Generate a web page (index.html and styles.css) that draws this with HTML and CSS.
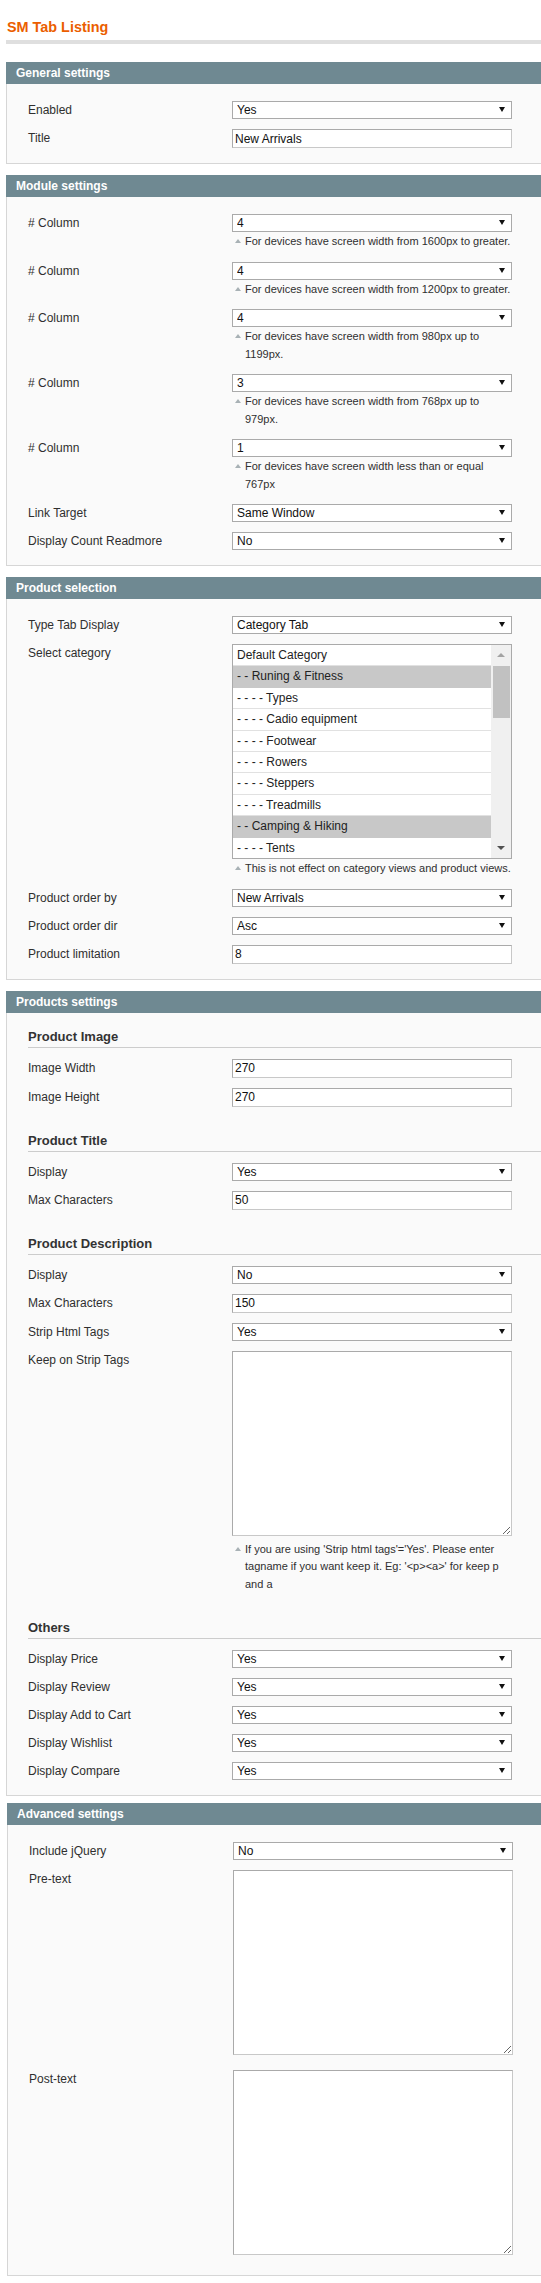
FILE: index.html
```html
<!DOCTYPE html>
<html lang="en">
<head>
<meta charset="utf-8">
<title>SM Tab Listing</title>
<link rel="stylesheet" href="styles.css">
</head>
<body>
<div class="page">
  <header class="content-header">
    <h3 class="page-title">SM Tab Listing</h3>
  </header>

  <section class="box">
    <div class="box-head"><h4>General settings</h4></div>
    <div class="box-body">
      <div class="row">
        <label class="lbl">Enabled</label>
        <div class="val"><div class="sel"><select><option selected>Yes</option><option>No</option></select></div></div>
      </div>
      <div class="row">
        <label class="lbl">Title</label>
        <div class="val"><input class="txt" type="text" value="New Arrivals"></div>
      </div>
    </div>
  </section>

  <section class="box">
    <div class="box-head"><h4>Module settings</h4></div>
    <div class="box-body">
      <div class="row">
        <label class="lbl"># Column</label>
        <div class="val">
          <div class="sel"><select><option selected>4</option></select></div>
          <p class="note">For devices have screen width from 1600px to greater.</p>
        </div>
      </div>
      <div class="row">
        <label class="lbl"># Column</label>
        <div class="val">
          <div class="sel"><select><option selected>4</option></select></div>
          <p class="note">For devices have screen width from 1200px to greater.</p>
        </div>
      </div>
      <div class="row">
        <label class="lbl"># Column</label>
        <div class="val">
          <div class="sel"><select><option selected>4</option></select></div>
          <p class="note">For devices have screen width from 980px up to<br>1199px.</p>
        </div>
      </div>
      <div class="row">
        <label class="lbl"># Column</label>
        <div class="val">
          <div class="sel"><select><option selected>3</option></select></div>
          <p class="note">For devices have screen width from 768px up to<br>979px.</p>
        </div>
      </div>
      <div class="row">
        <label class="lbl"># Column</label>
        <div class="val">
          <div class="sel"><select><option selected>1</option></select></div>
          <p class="note">For devices have screen width less than or equal<br>767px</p>
        </div>
      </div>
      <div class="row">
        <label class="lbl">Link Target</label>
        <div class="val"><div class="sel"><select><option selected>Same Window</option><option>New Window</option></select></div></div>
      </div>
      <div class="row">
        <label class="lbl">Display Count Readmore</label>
        <div class="val"><div class="sel"><select><option selected>No</option><option>Yes</option></select></div></div>
      </div>
    </div>
  </section>

  <section class="box">
    <div class="box-head"><h4>Product selection</h4></div>
    <div class="box-body">
      <div class="row">
        <label class="lbl">Type Tab Display</label>
        <div class="val"><div class="sel"><select><option selected>Category Tab</option></select></div></div>
      </div>
      <div class="row">
        <label class="lbl">Select category</label>
        <div class="val">
          <div class="listbox" role="listbox" aria-multiselectable="true">
            <ul class="opts">
              <li role="option">Default Category</li>
              <li role="option" class="on" aria-selected="true">- - Runing &amp; Fitness</li>
              <li role="option">- - - - Types</li>
              <li role="option">- - - - Cadio equipment</li>
              <li role="option">- - - - Footwear</li>
              <li role="option">- - - - Rowers</li>
              <li role="option">- - - - Steppers</li>
              <li role="option">- - - - Treadmills</li>
              <li role="option" class="on" aria-selected="true">- - Camping &amp; Hiking</li>
              <li role="option">- - - - Tents</li>
            </ul>
            <div class="sbar" aria-hidden="true">
              <span class="sb-btn sb-up"></span>
              <span class="sb-thumb"></span>
              <span class="sb-space"></span>
              <span class="sb-btn sb-down"></span>
            </div>
          </div>
          <p class="note">This is not effect on category views and product views.</p>
        </div>
      </div>
      <div class="row">
        <label class="lbl">Product order by</label>
        <div class="val"><div class="sel"><select><option selected>New Arrivals</option></select></div></div>
      </div>
      <div class="row">
        <label class="lbl">Product order dir</label>
        <div class="val"><div class="sel"><select><option selected>Asc</option><option>Desc</option></select></div></div>
      </div>
      <div class="row">
        <label class="lbl">Product limitation</label>
        <div class="val"><input class="txt" type="text" value="8"></div>
      </div>
    </div>
  </section>

  <section class="box tight">
    <div class="box-head"><h4>Products settings</h4></div>
    <div class="box-body">
      <h5 class="subhead first">Product Image</h5>
      <div class="row">
        <label class="lbl">Image Width</label>
        <div class="val"><input class="txt" type="text" value="270"></div>
      </div>
      <div class="row">
        <label class="lbl">Image Height</label>
        <div class="val"><input class="txt" type="text" value="270"></div>
      </div>

      <h5 class="subhead">Product Title</h5>
      <div class="row">
        <label class="lbl">Display</label>
        <div class="val"><div class="sel"><select><option selected>Yes</option><option>No</option></select></div></div>
      </div>
      <div class="row">
        <label class="lbl">Max Characters</label>
        <div class="val"><input class="txt" type="text" value="50"></div>
      </div>

      <h5 class="subhead">Product Description</h5>
      <div class="row">
        <label class="lbl">Display</label>
        <div class="val"><div class="sel"><select><option selected>No</option><option>Yes</option></select></div></div>
      </div>
      <div class="row">
        <label class="lbl">Max Characters</label>
        <div class="val"><input class="txt" type="text" value="150"></div>
      </div>
      <div class="row">
        <label class="lbl">Strip Html Tags</label>
        <div class="val"><div class="sel"><select><option selected>Yes</option><option>No</option></select></div></div>
      </div>
      <div class="row">
        <label class="lbl">Keep on Strip Tags</label>
        <div class="val">
          <textarea class="area"></textarea>
          <p class="note">If you are using 'Strip html tags'='Yes'. Please enter<br>tagname if you want keep it. Eg: '&lt;p&gt;&lt;a&gt;' for keep p<br>and a</p>
        </div>
      </div>

      <h5 class="subhead">Others</h5>
      <div class="row">
        <label class="lbl">Display Price</label>
        <div class="val"><div class="sel"><select><option selected>Yes</option><option>No</option></select></div></div>
      </div>
      <div class="row">
        <label class="lbl">Display Review</label>
        <div class="val"><div class="sel"><select><option selected>Yes</option><option>No</option></select></div></div>
      </div>
      <div class="row">
        <label class="lbl">Display Add to Cart</label>
        <div class="val"><div class="sel"><select><option selected>Yes</option><option>No</option></select></div></div>
      </div>
      <div class="row">
        <label class="lbl">Display Wishlist</label>
        <div class="val"><div class="sel"><select><option selected>Yes</option><option>No</option></select></div></div>
      </div>
      <div class="row">
        <label class="lbl">Display Compare</label>
        <div class="val"><div class="sel"><select><option selected>Yes</option><option>No</option></select></div></div>
      </div>
    </div>
  </section>

  <section class="box adv">
    <div class="box-head"><h4>Advanced settings</h4></div>
    <div class="box-body">
      <div class="row">
        <label class="lbl">Include jQuery</label>
        <div class="val"><div class="sel"><select><option selected>No</option><option>Yes</option></select></div></div>
      </div>
      <div class="row">
        <label class="lbl">Pre-text</label>
        <div class="val"><textarea class="area"></textarea></div>
      </div>
      <div class="row">
        <label class="lbl">Post-text</label>
        <div class="val"><textarea class="area"></textarea></div>
      </div>
    </div>
  </section>
</div>
</body>
</html>
```

FILE: styles.css
```css
html, body {
  margin: 0;
  padding: 0;
  background: #ffffff;
  overflow: hidden;
}

body {
  font-family: "Liberation Sans", Arial, sans-serif;
  font-size: 12px;
  color: #2f2f2f;
}

.page {
  width: 541px;
  box-sizing: border-box;
  padding-left: 6px;
  overflow: hidden;
}

/* ---------- page title ---------- */
.content-header {
  padding-top: 18px;
  border-bottom: 4px solid #dfdfdf;
  margin-bottom: 18px;
}

.page-title {
  margin: 0;
  padding: 0 0 4px 1px;
  font-size: 14.4px;
  line-height: 18px;
  font-weight: bold;
  color: #eb5e00;
}

/* ---------- boxes ---------- */
.box {
  margin: 0 -40px 11px 0;
}

.box.tight {
  margin-bottom: 7px;
}

.box.adv {
  margin-left: 1px;
}

.box-head {
  height: 22px;
  padding: 0 10px;
  background: #6f8992;
}

.box-head h4 {
  margin: 0;
  font-size: 12px;
  line-height: 22px;
  font-weight: bold;
  color: #ffffff;
}

.box-body {
  background: #fafafa;
  border: 1px solid #d6d6d6;
  border-top: 0;
  padding: 12px 0 10px 21px;
}

/* ---------- rows ---------- */
.row {
  display: flex;
  align-items: flex-start;
  padding: 5px 0;
}

.lbl {
  flex: none;
  width: 204px;
  line-height: 18px;
  color: #2f2f2f;
}

.val {
  flex: none;
  width: 280px;
}

/* ---------- sub headings ---------- */
.subhead {
  margin: 17px 0 6px;
  padding: 3px 0 1px;
  font-size: 13px;
  line-height: 18px;
  font-weight: bold;
  color: #333333;
  border-bottom: 1px solid #cccccc;
}

.subhead.first {
  margin-top: 0;
}

/* ---------- controls ---------- */
.sel {
  position: relative;
  height: 18px;
}

.sel select {
  -webkit-appearance: none;
  appearance: none;
  display: block;
  width: 100%;
  height: 18px;
  box-sizing: border-box;
  margin: 0;
  padding: 0 0 0 4px;
  border: 1px solid #aaaaaa;
  border-radius: 0;
  background: #ffffff;
  font: 12px "Liberation Sans", Arial, sans-serif;
  color: #111111;
}

.sel::after {
  content: "";
  position: absolute;
  right: 7px;
  top: 6px;
  border-left: 3px solid transparent;
  border-right: 3px solid transparent;
  border-top: 5px solid #111111;
  pointer-events: none;
}

.txt {
  display: block;
  width: 280px;
  height: 19px;
  box-sizing: border-box;
  margin: 0;
  padding: 0 2px;
  border: 1px solid;
  border-color: #aaaaaa #c8c8c8 #c8c8c8 #aaaaaa;
  background: #ffffff;
  font: 12px "Liberation Sans", Arial, sans-serif;
  color: #111111;
}

.area {
  display: block;
  width: 280px;
  height: 185px;
  box-sizing: border-box;
  margin: 0 0 5px;
  padding: 2px;
  border: 1px solid;
  border-color: #aaaaaa #c8c8c8 #c8c8c8 #aaaaaa;
  background: #ffffff;
  font: 12px "Liberation Sans", Arial, sans-serif;
}

/* ---------- notes ---------- */
.note {
  position: relative;
  margin: 1px 0;
  padding-left: 13px;
  font-size: 11px;
  line-height: 17.5px;
  white-space: nowrap;
  color: #2f2f2f;
}

.note::before {
  content: "";
  position: absolute;
  left: 3px;
  top: 6px;
  border-left: 3px solid transparent;
  border-right: 3px solid transparent;
  border-bottom: 4px solid #a8b1b5;
}

/* ---------- list box ---------- */
.listbox {
  display: flex;
  height: 215px;
  box-sizing: border-box;
  border: 1px solid #aaaaaa;
  background: #ffffff;
}

.opts {
  flex: 1;
  margin: 0;
  padding: 0;
  list-style: none;
  overflow: hidden;
}

.opts li {
  height: 21.4px;
  box-sizing: border-box;
  padding-left: 4px;
  line-height: 20.4px;
  border-bottom: 1px solid #e1e1e1;
  color: #222222;
  white-space: nowrap;
}

.opts li.on {
  background: #c8c8c8;
  border-bottom-color: #c8c8c8;
}

.sbar {
  flex: none;
  width: 20px;
  display: flex;
  flex-direction: column;
  align-items: center;
  background: #f0f0f0;
}

.sb-btn {
  width: 100%;
  height: 20px;
  display: flex;
  align-items: center;
  justify-content: center;
}

.sb-up::before {
  content: "";
  border-left: 4px solid transparent;
  border-right: 4px solid transparent;
  border-bottom: 4px solid #a3a3a3;
}

.sb-down::before {
  content: "";
  border-left: 4px solid transparent;
  border-right: 4px solid transparent;
  border-top: 4px solid #505050;
}

.sb-thumb {
  width: 17px;
  height: 52px;
  margin-top: 1px;
  background: #c1c1c1;
}

.sb-space {
  flex: 1;
}
```
